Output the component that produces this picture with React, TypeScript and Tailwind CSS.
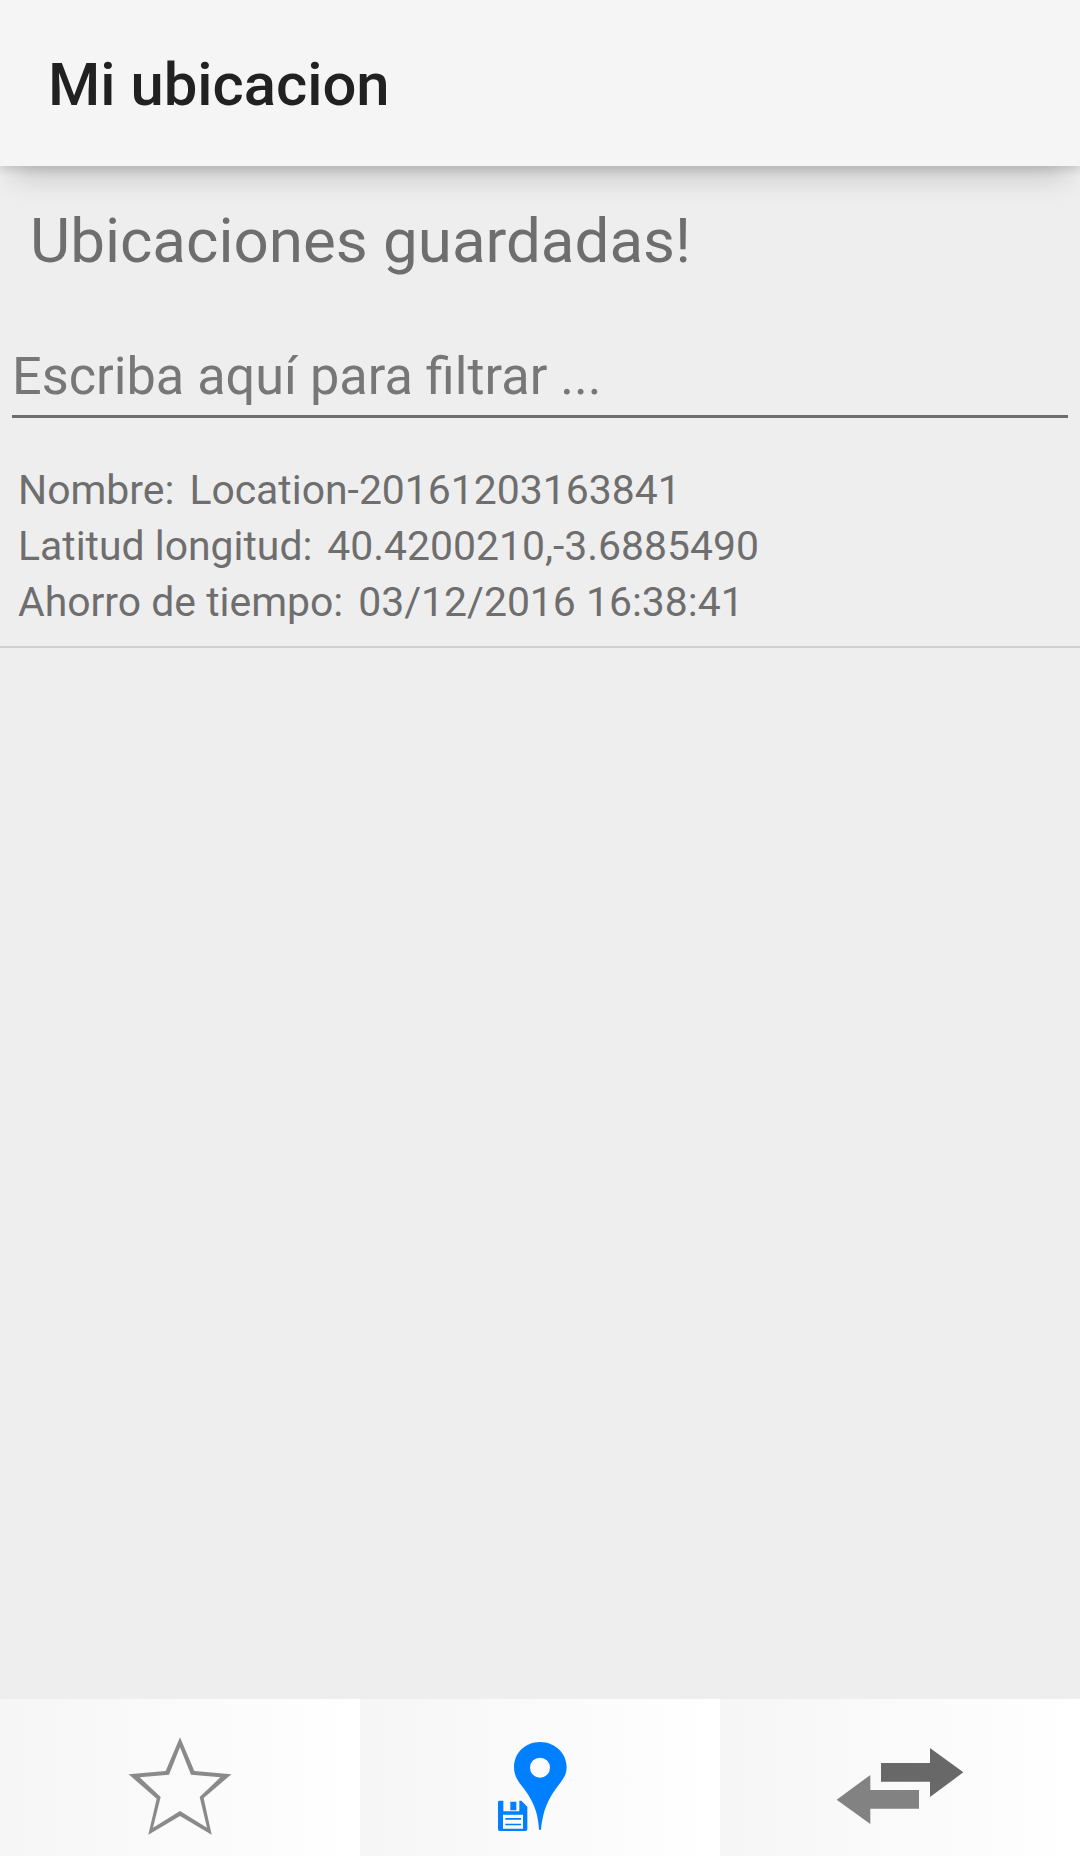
import { useState } from "react";

const tabs = [
  { label: "Favoritos", icon: StarIcon },
  { label: "Guardadas", icon: SavedPinIcon },
  { label: "Compartir", icon: SwapIcon },
];

const locations = [
  {
    name: "Location-20161203163841",
    coords: "40.4200210,-3.6885490",
    savedAt: "03/12/2016 16:38:41",
  },
];

function StarIcon() {
  return (
    <svg className="mt-0.5" width="112" height="112" viewBox="0 0 336 336" fill="#8a8a8a">
      <path
        fillRule="evenodd"
        d="M168 22L211 123L322 133L239 204L263 314L168 258L73 314L98 206L14 133L125 123ZM168 52L201 134L289 142L227 201L249 293L168 243L87 293L110 201L47 142L135 134Z"
      />
    </svg>
  );
}

function SavedPinIcon() {
  return (
    <svg width="120" height="130" viewBox="0 0 360 390" fill="#0080ff">
      <path
        fillRule="evenodd"
        d="M180 66C136 66 102 99 102 142C102 160 108 174 118 188C146 222 162 250 170 281C174 297 176 313 177 329H183C184 313 187 297 191 281C199 250 214 222 241 188C253 173 260 160 260 142C260 99 224 66 180 66ZM180 113A30 30 0 1 1 180 173A30 30 0 1 1 180 113Z"
      />
      <path
        fillRule="evenodd"
        d="M58 242H70V274H118V242H124L142 260V328Q142 333 137 333H59Q54 333 54 328V247Q54 242 58 242ZM69 284V326H129V284Z"
      />
      <path d="M91 245H109V271H91ZM76 294H123V299H76ZM76 311H123V316H76Z" />
    </svg>
  );
}

function SwapIcon() {
  return (
    <svg width="160" height="130" viewBox="0 0 480 390">
      <path fill="#686868" d="M183 129H330V84L430 157L330 231V185H183Z" />
      <path fill="#828282" d="M297 210H151V165L50 239L151 312V266H297Z" />
    </svg>
  );
}

function Field({ label, value }: { label: string; value: string }) {
  return (
    <div className="flex h-14 items-center gap-[15px] whitespace-pre">
      <dt>{label}</dt>
      <dd>{value}</dd>
    </div>
  );
}

export default function App() {
  const [filter, setFilter] = useState("");
  const visible = locations.filter((l) =>
    l.name.toLowerCase().includes(filter.toLowerCase())
  );

  return (
    <div className="flex h-[1856px] w-[1080px] flex-col overflow-hidden bg-[#eee] font-[Roboto,sans-serif] text-[#6e6e6e]">
      {/* Title bar */}
      <header className="relative flex h-[166px] shrink-0 items-center bg-[#f5f5f5] px-12 pt-1.5 shadow-[0_26px_26px_-14px_rgba(0,0,0,0.16),0_4px_8px_1px_rgba(0,0,0,0.11)]">
        <h1 className="text-[59.8px] font-medium leading-none text-[#212121]">Mi ubicacion</h1>
      </header>

      <main className="flex flex-1 flex-col">
        <h2 className="mt-[38px] h-[74px] pl-[30px] text-[61.9px] leading-[75px]">
          Ubicaciones guardadas!
        </h2>

        <div className="mx-3 mt-[66px] border-b-[3px] border-[#6e6e6e]">
          <input
            className="block h-[71px] w-full bg-transparent pb-[7px] text-[52.25px] leading-[60px] outline-none placeholder:text-[#777]"
            placeholder="Escriba aquí para filtrar ..."
            value={filter}
            onChange={(e) => setFilter(e.target.value)}
          />
        </div>

        <ul className="mt-11">
          {visible.map((l) => (
            <li key={l.name} className="border-b-2 border-[#d0d0d0] pb-4 pl-[18px]">
              <dl className="text-[40.9px] leading-[57px]">
                <Field label="Nombre:" value={l.name} />
                <Field label="Latitud longitud:" value={l.coords} />
                <Field label="Ahorro de tiempo:" value={l.savedAt} />
              </dl>
            </li>
          ))}
        </ul>
      </main>

      {/* Bottom tabs */}
      <nav className="grid h-[157px] shrink-0 grid-cols-3">
        {tabs.map(({ label, icon: Icon }) => (
          <button
            key={label}
            aria-label={label}
            className="flex items-center justify-center bg-linear-to-r from-[#f6f6f6] to-white pt-[15px]"
          >
            <Icon />
          </button>
        ))}
      </nav>
    </div>
  );
}
